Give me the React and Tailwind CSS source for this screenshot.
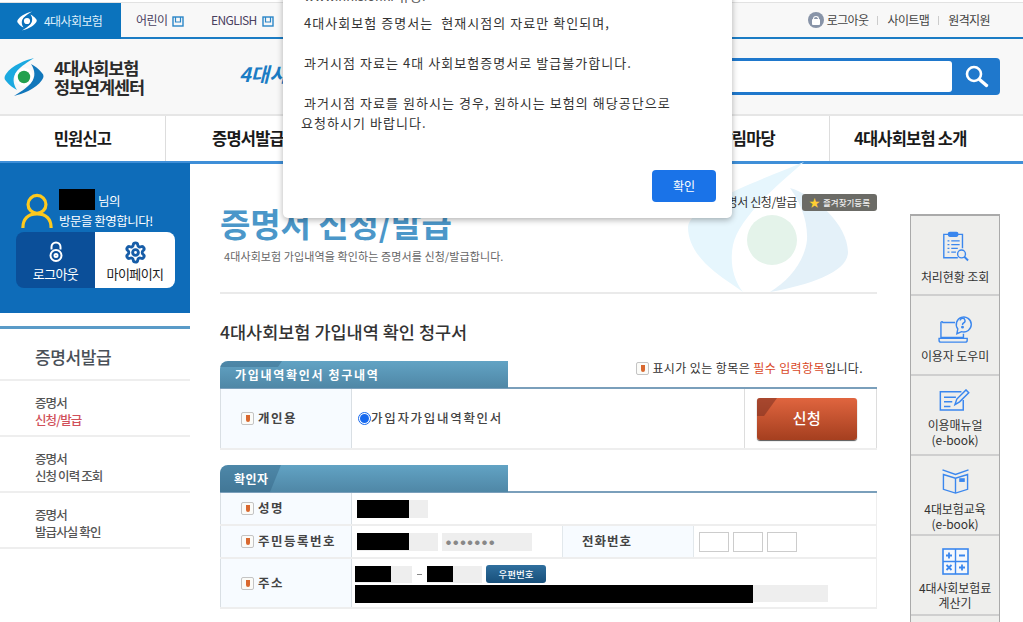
import React from "react";
import { Settings } from "lucide-react";

const font = { fontFamily: '"Noto Sans CJK KR", "Noto Sans", sans-serif' };

function Logo({ size = 40, light = false }) {
  const a = light ? "#ffffff" : "#1ba9e0";
  const b = light ? "#ffffff" : "#1177bb";
  const c = light ? "#0b6fb8" : "#ffffff";
  const d = light ? "#ffffff" : "#22a04f";
  return (
    <svg width={size} height={size} viewBox="0 0 40 40" className="shrink-0">
      <path d="M30 1 C22 3 8 8 2 17 C0 20 0 22 2 24 C5 28 9 31 13 33 C9 27 8 20 13 14 C17 9 24 5 30 1Z" fill={a} />
      <path d="M10 39 C18 37 32 32 38 23 C40 20 40 18 38 16 C35 12 31 9 27 7 C31 13 32 20 27 26 C23 31 16 35 10 39Z" fill={b} />
      <circle cx="20" cy="20" r="9" fill={c} />
      <circle cx="20" cy="20" r="6.2" fill={d} />
    </svg>
  );
}

function Win() {
  return (
    <svg width="12" height="11" viewBox="0 0 12 11" className="inline-block ml-[5px]">
      <rect x="1" y="1" width="10" height="9" fill="none" stroke="#2a86c8" strokeWidth="1.4" />
      <path d="M3.5 1v5h5V1" fill="none" stroke="#2a86c8" strokeWidth="1.2" />
    </svg>
  );
}

function Req() {
  return (
    <span className="inline-flex w-[13px] h-[13px] items-center justify-center rounded-[2px] border border-[#c4c4c4] bg-[#fbfbf8] shrink-0">
      <span className="w-[4px] h-[7px] bg-[#d9682f] rounded-b-[2px]" />
    </span>
  );
}

function Tab({ children, pad = "pl-[15px]", letter = "tracking-[1.7px]", corner }) {
  return (
    <div className="h-[28px] border-b-2 border-[#7a9fbb]">
      <div className={`relative h-[27px] w-[288px] overflow-hidden rounded-tl-[8px] bg-gradient-to-b from-[#62a3c4] to-[#4f87a6] ${pad} text-[12px] font-bold text-white flex items-center ${letter}`}>
        <svg width="62" height="27" viewBox="0 0 62 27" className="absolute left-0 top-0">
          <path d={corner} fill="#2f5f80" opacity="0.4" />
        </svg>
        <span className="relative">{children}</span>
      </div>
    </div>
  );
}

function Black({ w, h = 18, gray, grayH = 18 }) {
  return (
    <span className="relative inline-block bg-[#eeeeee] align-middle" style={{ width: gray, height: grayH }}>
      <span className="absolute left-0 top-0 bg-black" style={{ width: w, height: h }} />
    </span>
  );
}

function Quick({ icon, lines, pt, h }) {
  return (
    <div className="h-[80px] border-b-2 border-[#cfcfcf] flex flex-col items-center" style={{ paddingTop: pt }}>
      <div className="flex items-start justify-center" style={{ height: h }}>{icon}</div>
      <div className="text-[12px] leading-[15px] text-[#333333] text-center tracking-[-0.1px]">
        {lines.map((l) => (
          <div key={l}>{l}</div>
        ))}
      </div>
    </div>
  );
}

const blue = "#3b87ee";

const icons = {
  check: (
    <svg width="28" height="31" viewBox="0 0 30 32" fill="none" stroke={blue} strokeWidth="1.5">
      <path d="M9 3H3v25h15" />
      <path d="M17 3h6v15" />
      <rect x="8" y="1" width="10" height="4" rx="1.5" fill={blue} />
      <path d="M7 10h2M11 10h9M7 14h2M11 14h9M7 18h2M11 18h7M7 22h2M11 22h5" />
      <circle cx="22" cy="24" r="4.2" />
      <path d="M25 27l4 4" strokeWidth="2" />
    </svg>
  ),
  help: (
    <svg width="36" height="30" viewBox="0 0 36 32" fill="none" stroke={blue} strokeWidth="1.5">
      <path d="M18 9H5a1 1 0 0 0-2 1v15h24v-4" />
      <path d="M1 26h30v2a2 2 0 0 1-2 2H3a2 2 0 0 1-2-2Z" />
      <path d="M20 21l1-5a8 8 0 1 1 4 2.8Z" fill="#eeeeec" />
      <path d="M23.5 7a2.6 2.6 0 1 1 3.6 2.6c-1 .5-1.1 1-1.1 2" />
      <circle cx="26" cy="14" r=".8" fill={blue} />
    </svg>
  ),
  manual: (
    <svg width="34" height="22" viewBox="0 0 36 24" fill="none" stroke={blue} strokeWidth="1.6">
      <path d="M25 3H2v20h25V12" />
      <path d="M6 9h13M6 14h9M6 19h7" />
      <path d="M18 17l2-6L30 1l3 3-10 10Z" />
    </svg>
  ),
  book: (
    <svg width="29" height="26" viewBox="0 0 30 28" fill="none" stroke={blue} strokeWidth="1.5">
      <path d="M2 7v16l13 4 13-4V7L15 11Z" />
      <path d="M15 11v16" />
      <path d="M1 2l14 5 14-5" />
      <rect x="19" y="11" width="6" height="4" fill={blue} stroke="none" />
    </svg>
  ),
  calc: (
    <svg width="27" height="27" viewBox="0 0 27 27">
      <rect x="1" y="1" width="25" height="25" fill="#f6f8fc" stroke={blue} strokeWidth="1.6" />
      <path d="M13.5 1v25M1 13.5h25" stroke={blue} strokeWidth="1.4" />
      <path d="M4 7.5h6M7 4.5v6M17 7.5h6M4.5 17l5 5M9.5 17l-5 5M17 19.5h6M20 16.5v6" stroke={blue} strokeWidth="1.8" />
    </svg>
  ),
};

const menuItem = "h-[56px] border-b-2 border-[#eeeeee] pl-[35px] pt-[6px] flex flex-col justify-center text-[12.5px] font-medium leading-[17px] tracking-[-0.9px] text-[#555555]";
const th = "bg-[#f7fbff] border-l border-r border-[#d9dfe4] font-bold text-left pl-[20px] tracking-[1.5px]";

export default function App() {
  return (
    <div className="relative h-[622px] w-[1023px] overflow-hidden bg-white text-[#333333]" style={font}>
      {/* utility bar */}
      <div className="mt-[2px] h-[37px] border-t border-[#e2e2e2] border-b-2 border-b-[#1b7cc4] bg-[#f8f8f8] flex items-stretch text-[12px]">
        <div className="w-[121px] bg-[#0b73bd] flex items-center pl-[17px] gap-[7px] text-white -mb-[2px]">
          <Logo size={20} light />
          <span className="tracking-[-0.6px] text-[#dfeffa]">4대사회보험</span>
        </div>
        <div className="flex items-center pl-[15px] tracking-[-0.6px] text-[#4a4060]">
          <span className="w-[75px]">어린이<Win /></span>
          <span>ENGLISH<Win /></span>
        </div>
        <div className="ml-auto pr-[33px] flex items-center text-[#444444] tracking-[-0.6px]">
          <span className="w-[16px] h-[16px] rounded-full bg-[#8894a8] flex flex-col items-center justify-center mr-[3px]">
            <span className="w-[6px] h-[3px] border border-b-0 border-white rounded-t-[3px]" />
            <span className="w-[8px] h-[6px] bg-white rounded-[1px]" />
          </span>
          <span>로그아웃</span>
          <span className="w-px h-[9px] bg-[#cccccc] mx-[9px]" />
          <span>사이트맵</span>
          <span className="w-px h-[9px] bg-[#cccccc] mx-[9px]" />
          <span>원격지원</span>
        </div>
      </div>

      {/* header */}
      <div className="h-[77px] bg-[#f8f8f8] border-b-2 border-[#e6e6e6] flex items-center">
        <div className="ml-[4px] flex items-center gap-[10px] w-[140px] shrink-0">
          <Logo size={40} />
          <div className="text-[17.5px] leading-[19px] font-bold text-[#2b2b2b] tracking-[-1.1px] whitespace-nowrap">
            <div>4대사회보험</div>
            <div>정보연계센터</div>
          </div>
        </div>
        <span className="ml-[95px] -mt-[5px] text-[20px] font-bold italic text-[#1b7cc4] w-[44px] overflow-hidden whitespace-nowrap">4대사회보험</span>
        <div className="ml-auto mr-[23px] flex h-[37px] w-[300px] rounded-[4px] bg-[#1f78cc] p-[3px] pr-0">
          <div className="flex-1 bg-white rounded-[3px]" />
          <div className="w-[48px] flex items-center justify-center">
            <svg width="25" height="25" viewBox="0 0 25 25" fill="none" stroke="#ffffff">
              <circle cx="10" cy="10" r="7" strokeWidth="2.6" />
              <path d="M15.5 15.5l7 6" strokeWidth="3.4" strokeLinecap="round" />
            </svg>
          </div>
        </div>
      </div>

      {/* gnb */}
      <div className="h-[48px] border-b-[3px] border-[#3f8fd8] flex items-center bg-white text-[16.5px] font-bold text-[#1a1a1a] tracking-[-0.8px]">
        <div className="w-[166px] h-full flex items-center justify-center border-r border-[#dddddd]">민원신고</div>
        <div className="w-[164px] h-full flex items-center justify-center">증명서발급</div>
        <div className="w-[500px] h-full flex items-center justify-end pr-[54px] border-r border-[#dddddd]">알림마당</div>
        <div className="flex-1 h-full flex items-center pl-[24px]">4대사회보험 소개</div>
      </div>

      {/* body */}
      <div className="flex items-start">
        <aside className="w-[190px] shrink-0">
          <div className="h-[150px] bg-[#0e6cb9] pt-[26px] px-[16px] -mt-[1px]">
            <div className="flex items-start">
              <svg width="32" height="36" viewBox="0 0 34 38" fill="none" stroke="#fdc91e" strokeWidth="3.4" className="ml-[5px] mt-[4px] shrink-0">
                <circle cx="17" cy="12" r="9.5" />
                <path d="M2 37c0-9 5-15 15-15s15 6 15 15" />
              </svg>
              <div className="ml-[6px] text-[12.5px] text-white tracking-[-0.5px]">
                <div className="flex items-end">
                  <span className="w-[36px] h-[21px] bg-black mr-[3px]" />
                  <span className="leading-[18px]">님의</span>
                </div>
                <div className="leading-[21px] whitespace-nowrap">방문을 환영합니다!</div>
              </div>
            </div>
            <div className="flex h-[56px] w-[159px] rounded-[8px] overflow-hidden mt-[1px] text-[13px] tracking-[-0.6px]">
              <div className="w-[79px] bg-[#0b4f99] text-white flex flex-col items-center pt-[9px]">
                <svg width="16" height="22" viewBox="0 0 16 21" fill="none" stroke="#fff" strokeWidth="2">
                  <path d="M3.5 8V5.5a4.5 4.5 0 0 1 9 0V8" />
                  <circle cx="8" cy="14" r="5.5" />
                  <circle cx="8" cy="14" r="1.5" />
                </svg>
                <span className="mt-[3px] leading-[16px]">로그아웃</span>
              </div>
              <div className="flex-1 bg-white text-[#222222] flex flex-col items-center pt-[9px]">
                <Settings size={23} strokeWidth={3} className="text-[#175da8]" />
                <span className="mt-[2px] leading-[16px]">마이페이지</span>
              </div>
            </div>
          </div>
          <div className="mt-[13px] border-t-[3px] border-[#5a9bc8] h-[55px] pt-[5px] flex items-center pl-[35px] text-[17px] font-medium text-[#4a5058] tracking-[-0.4px] border-b-2 border-b-[#eeeeee]">증명서발급</div>
          <div className={menuItem}>
            <div>증명서</div>
            <div className="text-[#d0505a]">신청/발급</div>
          </div>
          <div className={menuItem}>
            <div>증명서</div>
            <div>신청 이력 조회</div>
          </div>
          <div className={menuItem}>
            <div>증명서</div>
            <div>발급사실 확인</div>
          </div>
        </aside>

        <main className="relative w-[657px] ml-[30px] shrink-0 pt-[37px]">
          <svg width="210" height="140" viewBox="0 0 210 140" className="absolute left-[460px] top-[-4px]">
            <path d="M124 2C80 20 10 45 8 67C8 85 20 100 35 112C45 120 55 126 63 132C52 118 50 100 53 85C58 62 85 35 124 2Z" fill="#e6f6fd" />
            <path d="M110 28C135 35 168 65 168 92C168 112 130 125 90 132C110 120 125 100 127 80C128 60 120 42 110 28Z" fill="#e4f1f9" />
            <circle cx="92" cy="80" r="25" fill="#e4f3ea" />
          </svg>
          <div className="absolute right-0 top-[29px] flex items-center text-[12px] tracking-[-0.4px] text-[#333333]">
            <span>증명서 신청/발급</span>
            <span className="ml-[5px] h-[17px] w-[75px] rounded-[3px] bg-[#6b6b66] text-[8.5px] font-medium text-[#eeeeee] flex items-center justify-center gap-[3px] tracking-[0]">
              <span className="text-[#ffcf33] text-[11px] leading-none">★</span>즐겨찾기등록
            </span>
          </div>
          <h1 className="relative text-[33px] leading-[44px] font-bold text-[#4b97c9] tracking-[-0.1px]">증명서 신청/발급</h1>
          <p className="relative pl-[4px] mt-[3px] text-[11px] leading-[16px] text-[#666666] tracking-[0.1px]">4대사회보험 가입내역을 확인하는 증명서를 신청/발급합니다.</p>
          <div className="relative mt-[28px] h-[2px] bg-[#eaeaea]" />
          <h2 className="mt-[26px] text-[17.5px] leading-[24px] font-medium text-[#333333]">4대사회보험 가입내역 확인 청구서</h2>

          <div className="relative mt-[17px]">
            <div className="absolute right-[14px] top-[-2px] flex items-center gap-[3px] text-[12px] tracking-[0.4px] text-[#333333] whitespace-nowrap">
              <Req />
              <span>표시가 있는 항목은 <span className="text-[#d9481f]">필수 입력항목</span>입니다.</span>
            </div>
            <Tab corner="M8 0H62L58 6H0C0 3 3 0 8 0Z">가입내역확인서 청구내역</Tab>
            <table className="w-full border-collapse text-[12.5px] text-[#444444]">
              <tbody>
                <tr className="h-[60px] border-b-2 border-[#eeeeee]">
                  <th className={`w-[131px] ${th}`}>
                    <span className="flex items-center gap-[4px]"><Req />개인용</span>
                  </th>
                  <td className="w-[393px] pl-[6px] font-medium tracking-[1.7px]">
                    <span className="flex items-center">
                      <span className="w-[13px] h-[13px] rounded-full border border-[#1769ee] flex items-center justify-center shrink-0">
                        <span className="w-[9px] h-[9px] rounded-full bg-[#1769ee]" />
                      </span>
                      가입자가입내역확인서
                    </span>
                  </td>
                  <td className="border-l border-r border-[#dddddd] pl-[12px]">
                    <div className="relative overflow-hidden h-[42px] w-[100px] rounded-[3px] bg-gradient-to-b from-[#e0653f] to-[#a53f1f] text-white text-[15px] font-medium flex items-center justify-center tracking-[0.5px] shadow-[0_1px_1px_#555555]">
                      <svg width="20" height="20" viewBox="0 0 20 20" className="absolute left-0 top-0">
                        <path d="M0 0H20L7 18H0Z" fill="#7a3020" opacity="0.55" />
                      </svg>
                      <span className="relative">신청</span>
                    </div>
                  </td>
                </tr>
              </tbody>
            </table>
          </div>

          <div className="mt-[15px]">
            <Tab pad="pl-[14px]" letter="tracking-[0.5px]" corner="M8 0H61L50 27H0V8C0 3 3 0 8 0Z">확인자</Tab>
            <table className="w-full border-collapse text-[12.5px] text-[#444444]">
              <tbody>
                <tr className="h-[32px] border-b-2 border-[#eeeeee]">
                  <th className={`w-[131px] ${th}`}>
                    <span className="flex items-center gap-[4px]"><Req />성명</span>
                  </th>
                  <td colSpan={3} className="pl-[5px] border-r border-[#eeeeee]">
                    <Black w={52} gray={71} />
                  </td>
                </tr>
                <tr className="h-[33px] border-b-2 border-[#eeeeee]">
                  <th className={th}>
                    <span className="flex items-center gap-[4px]"><Req />주민등록번호</span>
                  </th>
                  <td className="w-[211px] pl-[5px]">
                    <span className="flex items-center gap-[4px]">
                      <Black w={52} h={17} gray={81} />
                      <span className="h-[18px] w-[90px] bg-[#eeeeee] text-[#888888] text-[5px] flex items-center pl-[4px] tracking-[2.2px]">●●●●●●●</span>
                    </span>
                  </td>
                  <th className="w-[131px] bg-[#f7fbff] border-l border-r border-[#e2e8ec] font-bold text-left pl-[19px] tracking-[1px]">전화번호</th>
                  <td className="pl-[5px] border-r border-[#eeeeee]">
                    <span className="flex gap-[4px]">
                      <span className="w-[30px] h-[20px] border border-[#cccccc]" />
                      <span className="w-[30px] h-[20px] border border-[#cccccc]" />
                      <span className="w-[30px] h-[20px] border border-[#cccccc]" />
                    </span>
                  </td>
                </tr>
                <tr className="h-[50px] border-b-2 border-[#eeeeee]">
                  <th className={th}>
                    <span className="flex items-center gap-[4px]"><Req />주소</span>
                  </th>
                  <td colSpan={3} className="pl-[3px] border-r border-[#eeeeee]">
                    <div className="flex items-center h-[20px]">
                      <Black w={36} h={16} gray={57} grayH={17} />
                      <span className="w-[5px] h-px bg-[#888888] mx-[5px]" />
                      <Black w={26} h={16} gray={55} grayH={17} />
                      <span className="ml-[4px] h-[18px] w-[60px] rounded-[3px] bg-gradient-to-b from-[#2f6f9e] to-[#174f7a] text-white text-[9.5px] font-medium flex items-center justify-center">우편번호</span>
                    </div>
                    <div className="mt-[1px] h-[17px] w-[473px] bg-[#eeeeee]">
                      <div className="h-[18px] w-[398px] bg-black" />
                    </div>
                  </td>
                </tr>
              </tbody>
            </table>
          </div>
        </main>

        <div className="ml-[33px] mt-[50px] w-[90px] shrink-0 border-x border-t-2 border-[#aaaaaa] bg-[#eeeeec]">
          <Quick icon={icons.check} lines={["처리현황 조회"]} pt={15} h={38} />
          <Quick icon={icons.help} lines={["이용자 도우미"]} pt={18} h={34} />
          <Quick icon={icons.manual} lines={["이용매뉴얼", "(e-book)"]} pt={13} h={28} />
          <Quick icon={icons.book} lines={["4대보험교육", "(e-book)"]} pt={12} h={33} />
          <Quick icon={icons.calc} lines={["4대사회보험료", "계산기"]} pt={12} h={32} />
          <div className="h-[20px]" />
        </div>
      </div>

      {/* dialog */}
      <div className="absolute left-[283px] top-[-30px] h-[248px] w-[449px] rounded-[5px] bg-white shadow-[0_2px_6px_rgba(0,0,0,0.3)] text-[13px] leading-[20px] text-[#333333]">
        <div className="pl-[21px] pt-[16px] text-[#555555] whitespace-pre">www.nhis.or.kr 유용.</div>
        <div className="pl-[18px] pt-[7px] tracking-[1.05px] whitespace-pre">
          <div className="pl-[3px]">4대사회보험 증명서는  현재시점의 자료만 확인되며,</div>
          <div className="h-[20px]" />
          <div className="pl-[3px]">과거시점 자료는 4대 사회보험증명서로 발급불가합니다.</div>
          <div className="h-[20px]" />
          <div className="pl-[3px]">과거시점 자료를 원하시는 경우, 원하시는 보험의 해당공단으로</div>
          <div>요청하시기 바랍니다.</div>
        </div>
        <div className="absolute right-[16px] bottom-[16px] h-[32px] w-[64px] rounded-[4px] bg-[#1a73e8] text-white text-[12px] flex items-center justify-center">확인</div>
      </div>
    </div>
  );
}
